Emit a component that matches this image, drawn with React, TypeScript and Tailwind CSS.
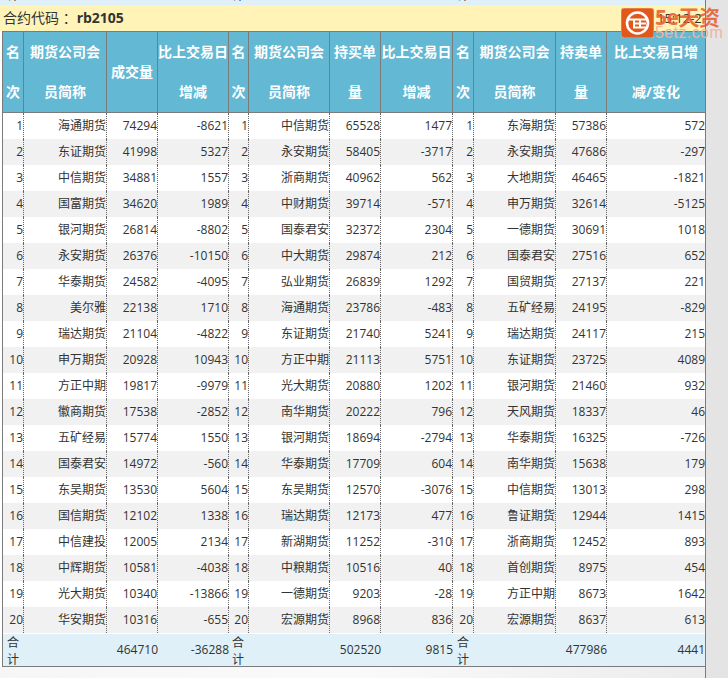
const groupA = `海通期货,74294,-8621
东证期货,41998,5327
中信期货,34881,1557
国富期货,34620,1989
银河期货,26814,-8802
永安期货,26376,-10150
华泰期货,24582,-4095
美尔雅,22138,1710
瑞达期货,21104,-4822
申万期货,20928,10943
方正中期,19817,-9979
徽商期货,17538,-2852
五矿经易,15774,1550
国泰君安,14972,-560
东吴期货,13530,5604
国信期货,12102,1338
中信建投,12005,2134
中辉期货,10581,-4038
光大期货,10340,-13866
华安期货,10316,-655`;
const groupB = `中信期货,65528,1477
永安期货,58405,-3717
浙商期货,40962,562
中财期货,39714,-571
国泰君安,32372,2304
中大期货,29874,212
弘业期货,26839,1292
海通期货,23786,-483
东证期货,21740,5241
方正中期,21113,5751
光大期货,20880,1202
南华期货,20222,796
银河期货,18694,-2794
华泰期货,17709,604
东吴期货,12570,-3076
瑞达期货,12173,477
新湖期货,11252,-310
中粮期货,10516,40
一德期货,9203,-28
宏源期货,8968,836`;
const groupC = `东海期货,57386,572
永安期货,47686,-297
大地期货,46465,-1821
申万期货,32614,-5125
一德期货,30691,1018
国泰君安,27516,652
国贸期货,27137,221
五矿经易,24195,-829
瑞达期货,24117,215
东证期货,23725,4089
银河期货,21460,932
天风期货,18337,46
华泰期货,16325,-726
南华期货,15638,179
中信期货,13013,298
鲁证期货,12944,1415
浙商期货,12452,893
首创期货,8975,454
方正中期,8673,1642
宏源期货,8637,613`;

const parse = (s: string) => s.split("\n").map((l) => l.split(","));
const a = parse(groupA);
const b = parse(groupB);
const c = parse(groupC);

const widths = [21, 83, 51, 71, 20, 81, 51, 72, 21, 82, 51, 99];
const headers = [
  "名次", "期货公司会员简称", "成交量", "比上交易日增减",
  "名次", "期货公司会员简称", "持买单量", "比上交易日增减",
  "名次", "期货公司会员简称", "持卖单量", "比上交易日增减/变化",
];

function Cell({ children, last }: { children: React.ReactNode; last?: boolean }) {
  return (
    <td
      className={
        last
          ? "p-0 h-[26px] text-right border-r border-solid border-[#7b7b7b]"
          : "p-0 h-[26px] text-right border-r border-dotted border-[#666666]"
      }
    >
      {children}
    </td>
  );
}

function Logo() {
  return (
    <div className="absolute left-[621px] top-[8px] flex items-start gap-[1px]">
      <svg width="33" height="30" viewBox="0 0 33 30">
        <rect x="0" y="0" width="33" height="30" rx="3" fill="#e2581a" stroke="#f6b48f" strokeWidth="0.8" />
        <circle cx="16.5" cy="15" r="10.5" fill="none" stroke="#ffffff" strokeWidth="2.6" />
        <path d="M7 11.5H26M13 11.5V19.5H25M13 15.5H25M19 11.5V19.5" fill="none" stroke="#ffffff" strokeWidth="2" />
      </svg>
      <div className="flex flex-col w-[74px]">
        <div className="text-[21px] leading-[19px] font-bold text-[#e8572a]/85 whitespace-nowrap tracking-[-0.5px]">5e天资</div>
        <div className="-mt-[2px] text-[16px] leading-[15px] text-[#f0b4a0] whitespace-nowrap tracking-[0.4px] font-['Liberation_Sans',sans-serif]">5etz.com</div>
      </div>
    </div>
  );
}

const totalLabel = "h-[32px] leading-[17px]";

export default function App() {
  return (
    <div className="relative flex w-[728px] h-[678px] overflow-hidden bg-white text-[12px] text-[#333333] font-['Open_Sans','Noto_Sans_CJK_SC',sans-serif]">
      <div className="flex flex-col w-[705px] shrink-0">
        <div className="flex h-[5px] overflow-hidden bg-[#dff0f8] items-end leading-[17px] shrink-0">
          <span className="ml-[7px] w-[225px] shrink-0 mb-[1px]">计</span>
          <span className="w-[225px] shrink-0 mb-[1px]">计</span>
          <span className="mb-[1px]">计</span>
        </div>
        <div className="h-[26px] bg-[#fff3b8] pl-[3px] text-[14px] leading-[26px] shrink-0 text-[#333333]">
          合约代码 ：<b className="text-[14px]">rb2105</b>
          <span className="absolute left-[657px] top-[9px] text-[13px] leading-[18px] whitespace-nowrap">15:12-2</span>
        </div>
        <div className="ml-[2px] border-l border-[#7b7b7b] shrink-0 w-[704px]">
          <table className="table-fixed border-separate border-spacing-0 w-[703px]">
            <colgroup>
              {widths.map((w, i) => (
                <col key={i} style={{ width: w }} />
              ))}
            </colgroup>
            <thead>
              <tr>
                {headers.map((h, i) => (
                  <th
                    key={i}
                    className="p-0 h-[82px] text-center align-middle bg-[#63b8d4] text-white text-[14px] font-bold leading-[40px] border-t border-b border-r border-[#7b7b7b]"
                  >
                    {h}
                  </th>
                ))}
              </tr>
            </thead>
            <tbody>
              {a.map((ra, i) => {
                const rb = b[i];
                const rc = c[i];
                return (
                  <tr key={i} className={i % 2 === 1 ? "bg-[#f1f1f1]" : "bg-white"}>
                    <Cell>{i + 1}</Cell>
                    <Cell>{ra[0]}</Cell>
                    <Cell>{ra[1]}</Cell>
                    <Cell>{ra[2]}</Cell>
                    <Cell>{i + 1}</Cell>
                    <Cell>{rb[0]}</Cell>
                    <Cell>{rb[1]}</Cell>
                    <Cell>{rb[2]}</Cell>
                    <Cell>{i + 1}</Cell>
                    <Cell>{rc[0]}</Cell>
                    <Cell>{rc[1]}</Cell>
                    <Cell last>{rc[2]}</Cell>
                  </tr>
                );
              })}
              <tr className="h-[1px] bg-white">
                <td colSpan={11} className="p-0 h-[1px] text-[0px] leading-[0]"></td>
                <td className="p-0 h-[1px] text-[0px] leading-[0] border-r border-[#7b7b7b]"></td>
              </tr>
              <tr className="bg-[#dff0f8] h-[33px]">
                <td className="p-0 pl-[4px] text-left align-top border-b border-[#7b7b7b]"><div className={totalLabel}>合计</div></td>
                <td className="p-0 border-b border-[#7b7b7b]"></td>
                <td className="p-0 text-right border-b border-[#7b7b7b]">464710</td>
                <td className="p-0 text-right border-b border-[#7b7b7b]">-36288</td>
                <td className="p-0 pl-[3px] text-left align-top border-b border-[#7b7b7b]"><div className={totalLabel}>合计</div></td>
                <td className="p-0 border-b border-[#7b7b7b]"></td>
                <td className="p-0 text-right border-b border-[#7b7b7b]">502520</td>
                <td className="p-0 text-right border-b border-[#7b7b7b]">9815</td>
                <td className="p-0 pl-[4px] text-left align-top border-b border-[#7b7b7b]"><div className={totalLabel}>合计</div></td>
                <td className="p-0 border-b border-[#7b7b7b]"></td>
                <td className="p-0 text-right border-b border-[#7b7b7b]">477986</td>
                <td className="p-0 text-right border-b border-r border-[#7b7b7b]">4441</td>
              </tr>
            </tbody>
          </table>
        </div>
        <div className="flex-1 bg-gradient-to-r from-[#f6f6f6] via-[#fafafa] to-[#ececec]"></div>
      </div>
      <div className="flex-1 bg-[#e4e4e4] border-l border-[#7b7b7b]"></div>
      <Logo />
    </div>
  );
}
